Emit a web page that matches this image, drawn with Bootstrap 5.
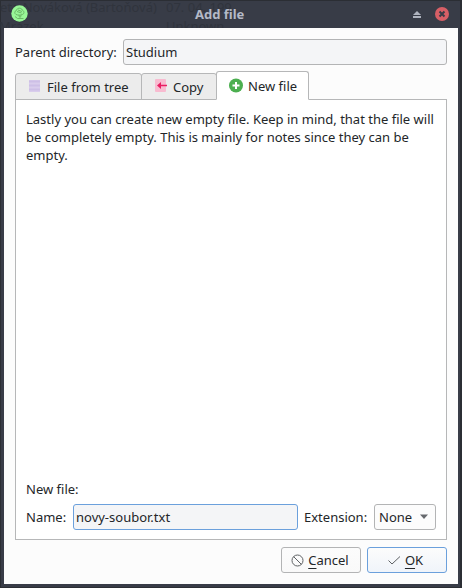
<!DOCTYPE html>
<html lang="en">
<head>
<meta charset="utf-8">
<title>Add file</title>
<link href="https://cdn.jsdelivr.net/npm/bootstrap@5.3.0/dist/css/bootstrap.min.css" rel="stylesheet">
<style>
body{font:13px/18px "Noto Sans",sans-serif;color:#232629;background:#383c47}
.win{width:462px;height:588px;border:1px solid #2b2e34;border-right-width:2px;padding:0 2px 3px 3px;background:#383c47}
.titlebar{height:27px;color:#b4bac7;font-weight:700}
.titlebar .caption{font-size:13px;left:191px;top:4px}
.app-icon{left:7px;top:4px}.shade-icon{left:408px;top:9px}.close-icon{left:431px;top:6px}
.ghost{color:#30343d;font-weight:400;left:-4px;top:-1px;width:460px;height:28px}
.ghost span{position:absolute;white-space:pre}
.g1{left:0;top:-2px}.g2{left:166px;top:-2px}.g3{left:-1px;top:17px}.g4{left:166px;top:17px}
.client{background:#fcfcfc;padding:11px}
.parent-label{width:108px}
.client .form-control,.client .form-select,.client .btn{font-size:13px;line-height:18px;height:26px;border:1px solid #b3b4b5;border-radius:3px;color:#232629;padding:3px 2px}
.client .form-control{background:#f4f5f7}
.client .name-field{width:225px;border-color:#6ba0dc;box-shadow:none}
.name-label{width:47px}
.ext-label{width:76px;padding-left:6px}
.client .ext{width:62px;padding:3px 4px;background:#fcfcfc}
.client .ext svg{margin-right:2px}
.tabs .tab{height:27px;background:#ececec;border:1px solid #b6b7b8;border-radius:3px 3px 0 0;margin-right:-1px}
.tabs .tab.current{height:29px;background:#fff;border-bottom-color:#fff;position:relative;z-index:1}
.tabs{margin-top:6px;margin-bottom:-1px}
.tab1{width:127px;padding:1px 0 0 12px}.tab2{width:76px;padding:1px 0 0 11px}.tab3{width:93px;padding:0 0 0 11px}
.tab1 svg{margin-top:-2px;margin-right:-1px}
.tab2 svg{margin-top:-2px}
.pane{background:#fff;border:1px solid #b6b7b8;padding:10px 10px 9px;height:441px}
.section-title{margin-bottom:6px}
.client .btn{width:80px;background:linear-gradient(#fcfcfc,#f9f9f9);padding-right:4px}
.client .btn.ok{border-color:#6ba0dc;background:linear-gradient(#fcfcfc,#f0f4fa);padding-right:5px}
.buttons{gap:6px}
u{text-underline-offset:3px;text-decoration-skip-ink:none}
</style>
</head>
<body class="m-0 overflow-hidden">
<div class="win d-flex flex-column">
  <header class="titlebar position-relative flex-shrink-0">
    <div class="ghost position-absolute overflow-hidden" aria-hidden="true">
      <span class="g1">eta Nováková (Bartoňová)</span><span class="g2">07. 04. 199</span>
      <span class="g3">Mrázek</span><span class="g4">Unknown</span>
    </div>
    <svg class="app-icon position-absolute" width="17" height="17" viewBox="0 0 17 17"><circle cx="8.5" cy="8.5" r="8.2" fill="#98f797"/><g fill="none" stroke="#66b062" stroke-width=".9"><path d="M5 9.500C3.200 8.500 3.500 6 5.200 5.700C6 2.500 10.500 2.500 11.200 5C13.500 6 13.500 9 11.300 9.500C9.500 10.300 7 10.300 5 9.500ZM8 10L8.500 12.500M10 10L9.500 12.500M4 11.500L6.500 13.500H12.500M6 6.500L10.500 8M7 5L11 6.500"/></g></svg>
    <span class="caption position-absolute">Add file</span>
    <svg class="shade-icon position-absolute" width="10" height="8" viewBox="0 0 10 8"><path d="M1 5L5 1L9 5ZM1 6H9V8H1Z" fill="#afb4bf"/></svg>
    <svg class="close-icon position-absolute" width="14" height="14" viewBox="0 0 14 14"><circle cx="7" cy="7" r="7" fill="#d75f66"/><path d="M4.500 4.500L9.500 9.500M9.500 4.500L4.500 9.500" stroke="#383c47" stroke-width="2"/></svg>
  </header>
  <main class="client flex-grow-1 d-flex flex-column">
    <div class="d-flex align-items-center">
      <label for="parent" class="parent-label text-nowrap flex-shrink-0">Parent directory:</label>
      <input id="parent" class="form-control" value="Studium">
    </div>
    <div class="tabs d-flex align-items-end" role="tablist">
      <div class="tab tab1 d-flex align-items-center" role="tab">
        <svg width="16" height="16" viewBox="0 0 16 16"><rect x="1" y="2" width="11" height="12" fill="#d9cdec"/><path d="M1 3.500H12M1 7.500H12M1 11.500H12" stroke="#cdbfe6" stroke-width="2"/></svg><span class="ms-1">File from tree</span>
      </div>
      <div class="tab tab2 d-flex align-items-center" role="tab">
        <svg width="16" height="16" viewBox="0 0 16 16"><rect x="2" y="1" width="11" height="13" rx="1" fill="#f8bbd0"/><path d="M4 7.500L8 4V6.800H14V8.200H8V11Z" fill="#e91e63"/></svg><span class="ms-1">Copy</span>
      </div>
      <div class="tab tab3 current d-flex align-items-center" role="tab">
        <svg width="16" height="16" viewBox="0 0 16 16"><circle cx="8" cy="7.500" r="7" fill="#4caf50"/><path d="M8 4V11M4.500 7.500H11.500" stroke="#fff" stroke-width="2"/></svg><span class="ms-1">New file</span>
      </div>
    </div>
    <section class="pane d-flex flex-column">
      <p class="mb-auto text-nowrap">Lastly you can create new empty file. Keep in mind, that the file will<br>be completely empty. This is mainly for notes since they can be<br>empty.</p>
      <div class="section-title">New file:</div>
      <div class="d-flex align-items-center">
        <label for="name" class="name-label flex-shrink-0">Name:</label>
        <input id="name" class="form-control name-field flex-shrink-0" value="novy-soubor.txt">
        <span class="ext-label flex-shrink-0">Extension:</span>
        <div class="form-select ext flex-shrink-0 d-flex align-items-center justify-content-between" role="combobox">None<svg width="10" height="6" viewBox="0 0 10 6"><path d="M1 .5H9L5 5Z" fill="#66696d"/></svg></div>
      </div>
    </section>
    <div class="buttons d-flex justify-content-end mt-auto">
      <button class="btn d-flex align-items-center justify-content-center"><svg class="me-1" width="13" height="13" viewBox="0 0 13 13"><g fill="none" stroke="#5e6164"><circle cx="6.500" cy="6.500" r="5.500"/><path d="M2.600 2.600L10.400 10.400"/></g></svg><span><u>C</u>ancel</span></button>
      <button class="btn ok d-flex align-items-center justify-content-center"><svg class="me-1" width="13" height="13" viewBox="0 0 13 13"><path d="M.5 6.500L4 10L12 2.500" fill="none" stroke="#5e6164"/></svg><span><u>O</u>K</span></button>
    </div>
  </main>
</div>
<script src="https://cdn.jsdelivr.net/npm/bootstrap@5.3.0/dist/js/bootstrap.bundle.min.js"></script>
</body>
</html>
